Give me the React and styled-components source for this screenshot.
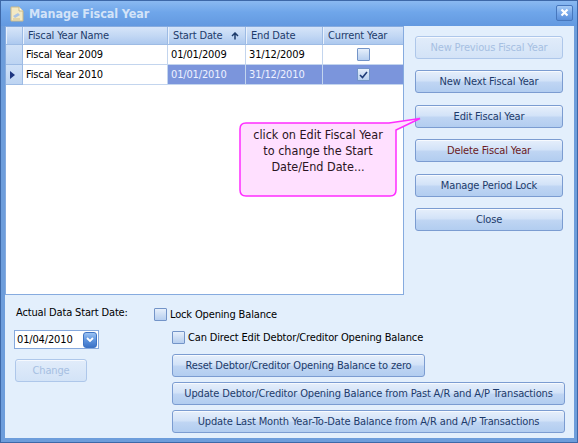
import React from 'react';
import styled, { createGlobalStyle } from 'styled-components';

const FONT = `"DejaVu Sans Condensed", "DejaVu Sans", sans-serif`;

const GlobalStyle = createGlobalStyle`
  html, body { margin: 0; padding: 0; background: #ffffff; }
  body { font-family: ${FONT}; font-size: 11px; font-stretch: condensed; letter-spacing: -0.15px; }
  * { box-sizing: border-box; }
`;

const Window = styled.div`
  width: 578px;
  height: 443px;
  background: #6d9ddb;
  border: 1px solid #3d68a8;
  padding: 0 3px 4px 4px;
  display: flex;
  flex-direction: column;
`;

const TitleBar = styled.div`
  height: 25px;
  flex: none;
  display: flex;
  align-items: center;
  margin: 0 -3px 0 -4px;
  padding: 0 4px 0 9px;
  background: linear-gradient(to bottom, #8ab9f1 0%, #6fa6ea 45%, #6399e0 100%);
`;

const TitleText = styled.div`
  flex: 1;
  margin-left: 5px;
  font-weight: bold;
  font-size: 12.5px;
  letter-spacing: -0.1px;
  color: #d3e3f8;
`;

const CloseBox = styled.div`
  width: 17px;
  height: 16px;
  margin-top: -2px;
  border: 1px solid #4777bd;
  border-radius: 2px;
  background: linear-gradient(to bottom, #a6cbf5 0%, #77a8ea 50%, #5a8fda 100%);
  display: flex;
  align-items: center;
  justify-content: center;
`;

const Body = styled.div`
  position: relative;
  flex: 1;
  background: #e3effc;
  display: flex;
  flex-direction: column;
`;

const TopArea = styled.div`
  display: flex;
  height: 269px;
  flex: none;
`;

const Grid = styled.div`
  width: 399px;
  height: 269px;
  border: 1px solid #86abdf;
  background: #ffffff;
`;

const GridRow = styled.div`
  display: grid;
  grid-template-columns: 17px 145px 78px 77px 80px;
  height: ${(p) => (p.$header ? 18 : 20)}px;
`;

const HeaderCell = styled.div`
  display: flex;
  align-items: center;
  justify-content: space-between;
  padding: 0 6px 0 5px;
  color: #1d3b6b;
  background: linear-gradient(to bottom, #d6e5f9 0%, #c3d8f4 50%, #adc9ef 100%);
  border-right: 1px solid #9dbbe4;
  border-bottom: 1px solid #9dbbe4;
  box-shadow: inset 1px 0 0 #e9f1fc;
  white-space: nowrap;
  &:last-child { border-right: none; }
`;

const RowHead = styled.div`
  display: flex;
  align-items: center;
  padding-left: 4px;
  background: linear-gradient(to bottom, #d0e1f7, #bdd4f2);
  border-right: 1px solid #9dbbe4;
  border-bottom: 1px solid #9dbbe4;
`;

const Cell = styled.div`
  display: flex;
  align-items: center;
  justify-content: ${(p) => (p.$center ? 'center' : 'flex-start')};
  padding: 0 3px;
  white-space: nowrap;
  color: ${(p) => (p.$selected ? '#eef1ff' : '#000000')};
  background: ${(p) => (p.$selected ? '#7b95dc' : '#ffffff')};
  border-right: 1px solid #c3d5ee;
  border-bottom: 1px solid #c3d5ee;
  &:last-child { border-right: none; }
`;

const SideButtons = styled.div`
  flex: 1;
  display: flex;
  flex-direction: column;
  gap: 11.4px;
  padding: 10px 0 0 11px;
`;

const Button = styled.div`
  width: ${(p) => p.$w || 148}px;
  height: 23px;
  flex: none;
  display: flex;
  align-items: center;
  justify-content: center;
  border-radius: 3px;
  white-space: nowrap;
  border: 1px solid ${(p) => (p.$disabled ? '#aec7ea' : '#7b9cd1')};
  color: ${(p) => (p.$disabled ? '#a6bfe2' : p.$danger ? '#6b1a22' : '#1d3b6b')};
  background: ${(p) =>
    p.$disabled
      ? 'linear-gradient(to bottom, #e1ecfa 0%, #d3e3f7 100%)'
      : 'linear-gradient(to bottom, #e6effb 0%, #d3e3f8 45%, #bfd5f3 55%, #b2cdf0 100%)'};
  box-shadow: inset 0 1px 0 rgba(255, 255, 255, 0.7);
`;

const BottomArea = styled.div`
  flex: 1;
  display: flex;
`;

const LeftCol = styled.div`
  width: 149px;
  padding: 11px 0 0 9px;
  display: flex;
  flex-direction: column;
  align-items: flex-start;
`;

const Label = styled.div`
  height: 13px;
  line-height: 13px;
  padding-left: 2px;
  color: #000;
  white-space: nowrap;
`;

const DateBox = styled.div`
  margin-top: 11px;
  width: 85px;
  height: 19px;
  border: 1px solid #86a9dd;
  background: #fff;
  display: flex;
  align-items: center;
  justify-content: space-between;
  padding: 0 1px 0 2px;
`;

const DropBtn = styled.div`
  width: 14px;
  height: 16px;
  border: 1px solid #3f74c4;
  border-radius: 3px;
  background: linear-gradient(to bottom, #9cc3f3 0%, #5e94de 50%, #3d74c8 100%);
  display: flex;
  align-items: center;
  justify-content: center;
`;

const RightCol = styled.div`
  flex: 1;
  padding-top: 13px;
  display: flex;
  flex-direction: column;
  align-items: flex-start;
`;

const CheckRow = styled.div`
  display: flex;
  align-items: center;
  gap: 3px;
  height: 13px;
  margin-left: ${(p) => p.$indent || 0}px;
  margin-top: ${(p) => p.$top || 0}px;
  color: #000;
  white-space: nowrap;
`;

const Box = styled.div`
  width: 13px;
  height: 13px;
  flex: none;
  border: 1px solid #7394c8;
  border-radius: 1px;
  background: linear-gradient(to bottom, #e6effb 0%, #c9dbf3 60%, #b7cff0 100%);
  display: flex;
  align-items: center;
  justify-content: center;
`;

const BottomButtons = styled.div`
  margin: 10px 0 0 18px;
  display: flex;
  flex-direction: column;
  gap: 5px;
`;

const Callout = styled.div`
  position: absolute;
  left: 233px;
  top: 89px;
  width: 184px;
  height: 84px;
`;

const CalloutText = styled.div`
  position: absolute;
  left: 2px;
  top: 12px;
  width: 156px;
  text-align: center;
  font-size: 12.5px;
  line-height: 16px;
  letter-spacing: 0;
  color: #2a1422;
`;

const Check = () => (
  <svg width="9" height="8" viewBox="0 0 9 8">
    <path d="M1 4 L3.5 6.5 L8 1" fill="none" stroke="#1d3b78" strokeWidth="1.6" />
  </svg>
);

const rows = [
  { name: 'Fiscal Year 2009', start: '01/01/2009', end: '31/12/2009', current: false },
  { name: 'Fiscal Year 2010', start: '01/01/2010', end: '31/12/2010', current: true },
];

const App = () => (
  <>
    <GlobalStyle />
    <Window>
      <TitleBar>
        <svg width="14" height="16" viewBox="0 0 14 16">
          <path d="M1 1 H9 L13 5 V15 H1 Z" fill="#f3e9c4" stroke="#c9b98a" />
          <path d="M9 1 V5 H13" fill="#fffbe8" stroke="#c9b98a" />
          <path d="M3 10 L8 7 L10 9 L5 12 Z" fill="#a9c3e6" />
          <path d="M3 13 H10" stroke="#d2c08d" />
        </svg>
        <TitleText>Manage Fiscal Year</TitleText>
        <CloseBox>
          <svg width="9" height="9" viewBox="0 0 9 9">
            <path d="M1.5 1.5 L7.5 7.5 M7.5 1.5 L1.5 7.5" stroke="#ffffff" strokeWidth="2.2" />
          </svg>
        </CloseBox>
      </TitleBar>
      <Body>
        <TopArea>
          <Grid>
            <GridRow $header>
              <HeaderCell />
              <HeaderCell>Fiscal Year Name</HeaderCell>
              <HeaderCell>
                Start Date
                <svg width="8" height="8" viewBox="0 0 8 8">
                  <path d="M4 7.5 V1.5 M1 4 L4 1 L7 4" fill="none" stroke="#1d3b6b" strokeWidth="1.5" />
                </svg>
              </HeaderCell>
              <HeaderCell>End Date</HeaderCell>
              <HeaderCell>Current Year</HeaderCell>
            </GridRow>
            {rows.map((r) => (
              <GridRow key={r.name}>
                <RowHead>
                  {r.current && (
                    <svg width="5" height="8" viewBox="0 0 5 8">
                      <path d="M0 0 L5 4 L0 8 Z" fill="#1d3580" />
                    </svg>
                  )}
                </RowHead>
                <Cell>{r.name}</Cell>
                <Cell $selected={r.current}>{r.start}</Cell>
                <Cell $selected={r.current}>{r.end}</Cell>
                <Cell $selected={r.current} $center>
                  <Box>{r.current && <Check />}</Box>
                </Cell>
              </GridRow>
            ))}
          </Grid>
          <SideButtons>
            <Button $disabled>New Previous Fiscal Year</Button>
            <Button>New Next Fiscal Year</Button>
            <Button>Edit Fiscal Year</Button>
            <Button $danger>Delete Fiscal Year</Button>
            <Button>Manage Period Lock</Button>
            <Button>Close</Button>
          </SideButtons>
        </TopArea>
        <BottomArea>
          <LeftCol>
            <Label>Actual Data Start Date:</Label>
            <DateBox>
              <span>01/04/2010</span>
              <DropBtn>
                <svg width="8" height="6" viewBox="0 0 8 6">
                  <path d="M1 1 L4 4 L7 1" fill="none" stroke="#ffffff" strokeWidth="1.8" />
                </svg>
              </DropBtn>
            </DateBox>
            <Button $disabled $w={72} style={{ marginTop: 10, marginLeft: 1 }}>Change</Button>
          </LeftCol>
          <RightCol>
            <CheckRow>
              <Box />
              Lock Opening Balance
            </CheckRow>
            <CheckRow $indent={18} $top={10}>
              <Box />
              Can Direct Edit Debtor/Creditor Opening Balance
            </CheckRow>
            <BottomButtons>
              <Button $w={253}>Reset Debtor/Creditor Opening Balance to zero</Button>
              <Button $w={393}>Update Debtor/Creditor Opening Balance from Past A/R and A/P Transactions</Button>
              <Button $w={393}>Update Last Month Year-To-Date Balance from A/R and A/P Transactions</Button>
            </BottomButtons>
          </RightCol>
        </BottomArea>
        <Callout>
          <svg width="184" height="84" viewBox="0 0 184 84" style={{ position: 'absolute', left: 0, top: 0 }}>
            <path
              d="M8 8 H151 L182 3.5 L158 15 V75 Q158 81 152 81 H8 Q2 81 2 75 V14 Q2 8 8 8 Z"
              fill="#ffe0ff"
              stroke="#ff2cff"
              strokeWidth="1.5"
            />
          </svg>
          <CalloutText>
            click on Edit Fiscal Year
            <br />
            to change the Start
            <br />
            Date/End Date...
          </CalloutText>
        </Callout>
      </Body>
    </Window>
  </>
);

export default App;
